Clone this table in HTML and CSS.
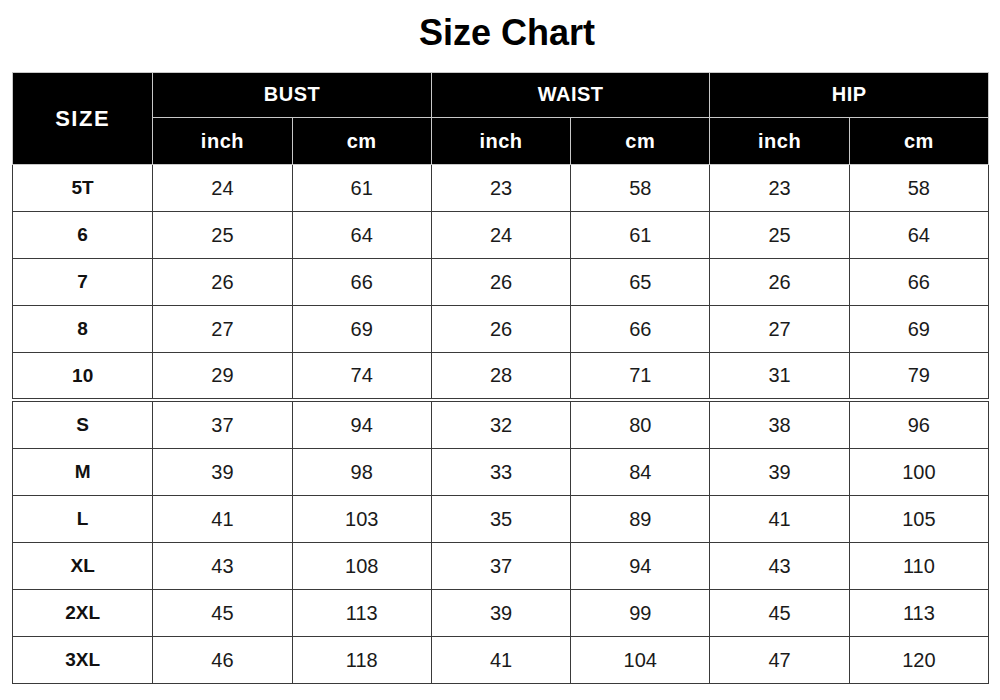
FILE: index.html
```html
<!DOCTYPE html>
<html>
<head>
<meta charset="utf-8">
<link rel="stylesheet" href="styles.css">
</head>
<body>
<h1 class="title">Size Chart</h1>
<table class="chart">
  <colgroup>
    <col class="c-size"><col class="c"><col class="c"><col class="c"><col class="c"><col class="c"><col class="c">
  </colgroup>
  <thead>
    <tr class="h1">
      <th rowspan="2" class="size-head">SIZE</th>
      <th colspan="2">BUST</th>
      <th colspan="2">WAIST</th>
      <th colspan="2">HIP</th>
    </tr>
    <tr class="h2">
      <th>inch</th><th>cm</th><th>inch</th><th>cm</th><th>inch</th><th>cm</th>
    </tr>
  </thead>
  <tbody>
    <tr><td class="sz">5T</td><td>24</td><td>61</td><td>23</td><td>58</td><td>23</td><td>58</td></tr>
    <tr><td class="sz">6</td><td>25</td><td>64</td><td>24</td><td>61</td><td>25</td><td>64</td></tr>
    <tr><td class="sz">7</td><td>26</td><td>66</td><td>26</td><td>65</td><td>26</td><td>66</td></tr>
    <tr><td class="sz">8</td><td>27</td><td>69</td><td>26</td><td>66</td><td>27</td><td>69</td></tr>
    <tr class="split"><td class="sz">10</td><td>29</td><td>74</td><td>28</td><td>71</td><td>31</td><td>79</td></tr>
    <tr><td class="sz">S</td><td>37</td><td>94</td><td>32</td><td>80</td><td>38</td><td>96</td></tr>
    <tr><td class="sz">M</td><td>39</td><td>98</td><td>33</td><td>84</td><td>39</td><td>100</td></tr>
    <tr><td class="sz">L</td><td>41</td><td>103</td><td>35</td><td>89</td><td>41</td><td>105</td></tr>
    <tr><td class="sz">XL</td><td>43</td><td>108</td><td>37</td><td>94</td><td>43</td><td>110</td></tr>
    <tr><td class="sz">2XL</td><td>45</td><td>113</td><td>39</td><td>99</td><td>45</td><td>113</td></tr>
    <tr><td class="sz">3XL</td><td>46</td><td>118</td><td>41</td><td>104</td><td>47</td><td>120</td></tr>
  </tbody>
</table>
</body>
</html>
```

FILE: styles.css
```css
html, body {
  margin: 0;
  padding: 0;
  background: #ffffff;
}
body {
  width: 1000px;
  height: 700px;
  overflow: hidden;
  font-family: "Liberation Sans", Arial, sans-serif;
  color: #111;
}
.title {
  margin: 0;
  height: 72px;
  line-height: 66px;
  text-align: center;
  font-size: 36px;
  font-weight: bold;
  padding-left: 14px;
  color: #000;
}
.chart {
  margin-left: 12px;
  border-collapse: collapse;
  table-layout: fixed;
  width: 977px;
}
.c-size { width: 140px; }
.c { width: 139px; }
.chart th {
  background: #000;
  color: #fff;
  font-weight: bold;
  font-size: 20px;
  letter-spacing: 0.5px;
  border: 1px solid #c8c8c8;
  text-align: center;
  padding: 0;
}
.h1 th { height: 42px; padding-bottom: 2px; }
.h2 th { height: 46px; }
.chart th.size-head {
  font-size: 22px;
  letter-spacing: 1.5px;
  padding-bottom: 0;
}
.chart td {
  border: 1px solid #3a3a3a;
  text-align: center;
  font-size: 20px;
  height: 46px;
  padding: 0;
  color: #1a1a1a;
}
.chart td.sz {
  font-weight: bold;
  font-size: 19px;
  color: #111;
}
.chart tr.split td {
  height: 45px;
  border-bottom: 4px double #3a3a3a;
}
```
